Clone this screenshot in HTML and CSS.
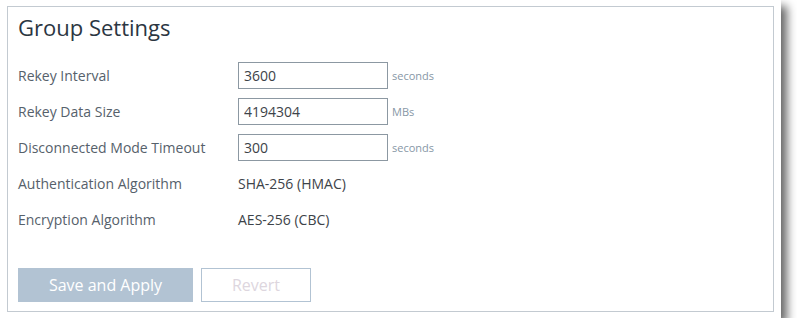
FILE: index.html
```html
<!DOCTYPE html>
<html lang="en">
<head>
    <meta charset="UTF-8">
    <meta name="viewport" content="width=device-width, initial-scale=1.0">
    <title>Group Settings</title>
    <link rel="stylesheet" href="styles.css">
</head>
<body>

    <div class="window">
        <div class="panel">
            <h1>Group Settings</h1>
            <form id="group-form" class="settings">
                <div class="row">
                    <label for="rekey-interval">Rekey Interval</label>
                    <input type="text" id="rekey-interval" value="3600">
                    <span class="unit">seconds</span>
                </div>
                <div class="row">
                    <label for="rekey-size">Rekey Data Size</label>
                    <input type="text" id="rekey-size" value="4194304">
                    <span class="unit">MBs</span>
                </div>
                <div class="row">
                    <label for="timeout">Disconnected Mode Timeout</label>
                    <input type="text" id="timeout" value="300">
                    <span class="unit">seconds</span>
                </div>
                <div class="row">
                    <label>Authentication Algorithm</label>
                    <span class="value">SHA-256 (HMAC)</span>
                </div>
                <div class="row">
                    <label>Encryption Algorithm</label>
                    <span class="value">AES-256 (CBC)</span>
                </div>

                <div class="actions">
                    <button type="submit" class="btn-primary" disabled>Save and Apply</button>
                    <button type="button" class="btn-secondary" disabled>Revert</button>
                </div>
            </form>
        </div>
    </div>

</body>
</html>
```

FILE: styles.css
```css
body {
    font-family: "Open Sans", Arial, sans-serif;
    background-color: #fff;
    margin: 0;
}

.window {
    width: 781px;
    height: 318px;
    box-sizing: border-box;
    padding: 6px 7px;
    background-color: #fff;
    box-shadow: 6px 6px 9px rgba(0, 0, 0, 0.6);
}

.panel {
    height: 100%;
    box-sizing: border-box;
    border: 1px solid #c3cad1;
    padding: 5px 10px 9px;
    display: flex;
    flex-direction: column;
}

h1 {
    margin: 0;
    font-size: 22px;
    font-weight: normal;
    line-height: 30px;
    color: #2b3642;
}

.settings {
    margin-top: 20px;
    display: flex;
    flex-direction: column;
    gap: 9px;
    flex: 1;
}

.row {
    display: flex;
    align-items: center;
    height: 27px;
}

.row label {
    width: 220px;
    font-size: 14px;
    color: #56616b;
}

.row input {
    width: 150px;
    height: 27px;
    box-sizing: border-box;
    border: 1px solid #8c98a2;
    padding: 0 5px;
    margin: 0;
    font-family: inherit;
    font-size: 14px;
    color: #3d4349;
}

.unit {
    margin-left: 4px;
    font-size: 11px;
    color: #8797a6;
}

.value {
    font-size: 14px;
    color: #3d4349;
}

.actions {
    margin-top: auto;
    display: flex;
    gap: 8px;
}

.actions button {
    height: 34px;
    margin: 0;
    font-family: inherit;
    font-size: 16px;
}

.btn-primary {
    width: 175px;
    background-color: #b2c3d3;
    color: #fff;
    border: none;
}

.btn-secondary {
    width: 110px;
    background-color: #fff;
    color: #ddd6de;
    border: 1px solid #b2c3d3;
}
```
